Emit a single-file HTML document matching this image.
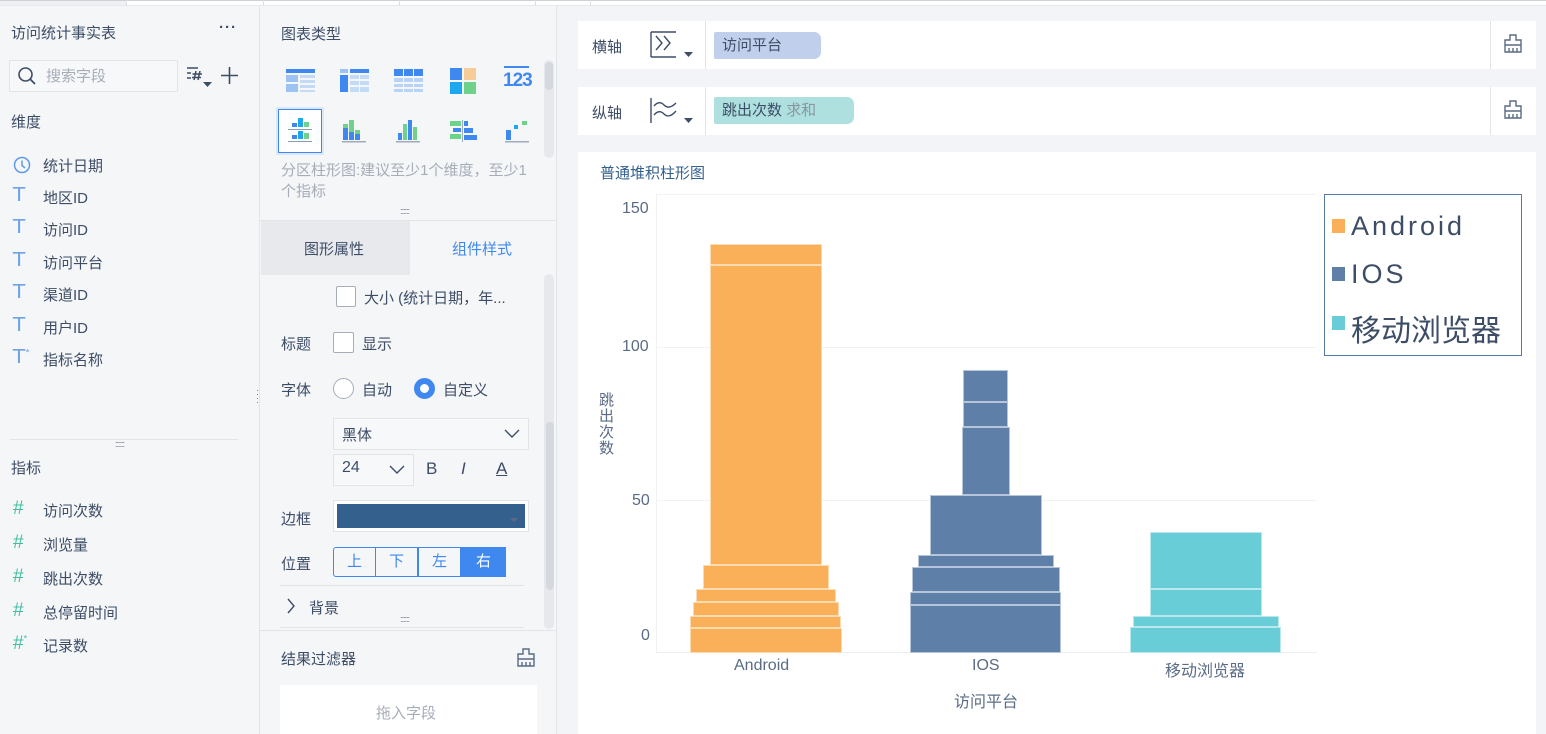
<!DOCTYPE html>
<html><head><meta charset="utf-8"><style>
*{margin:0;padding:0;box-sizing:border-box}
body{width:1546px;height:734px;overflow:hidden;background:#f3f4f7;font-family:"Liberation Sans","Noto Sans CJK SC",sans-serif;color:#3d4d66;font-size:14px;position:relative}
.a{position:absolute;white-space:nowrap}
.ic{position:absolute;color:#6fa3e6;font-size:20px;font-weight:300;transform:scaleX(1.1)}
.hash{position:absolute;color:#3fbfa0;font-size:19px}
.bar{position:absolute;border:1px solid rgba(255,255,255,.55)}
.o{background:#f9b058}.b{background:#5e80a8}.c{background:#68cdd7}
.seg{position:absolute;top:547px;height:30px;border:1px solid #3f88f0;font-size:15px;color:#3f88f0;text-align:center;line-height:28px;width:43px}
</style></head><body>
<!-- top strip -->
<div class="a" style="left:0;top:0;width:1546px;height:6px;background:#fff;border-top:1px solid #d0d1d4;border-bottom:1px solid #e6e8ec"></div>
<div class="a" style="left:0;top:1px;width:126px;height:4px;background:#eef0f4"></div>
<div class="a" style="left:126px;top:0;width:1px;height:6px;background:#dcdee2"></div>
<div class="a" style="left:263px;top:0;width:1px;height:6px;background:#dcdee2"></div>
<div class="a" style="left:399px;top:0;width:1px;height:6px;background:#dcdee2"></div>
<div class="a" style="left:535px;top:0;width:1px;height:6px;background:#dcdee2"></div>
<div class="a" style="left:590px;top:0;width:1px;height:6px;background:#dcdee2"></div>

<!-- left panel -->
<div class="a" style="left:0;top:6px;width:260px;height:728px;background:#f5f6f8;border-right:1px solid #e2e4e8"></div>
<div class="a" style="left:11px;top:22px;font-size:15px">访问统计事实表</div>
<div class="a" style="left:219px;top:19px;font-size:15px;font-weight:bold;letter-spacing:1px">···</div>
<div class="a" style="left:9px;top:60px;width:169px;height:32px;border:1px solid #e2e4e8;background:#f7f8fa;border-radius:2px"></div>
<svg class="a" style="left:17px;top:66px" width="20" height="20"><circle cx="8.5" cy="8.5" r="6.5" fill="none" stroke="#3d4d66" stroke-width="1.6"/><line x1="13" y1="13" x2="18" y2="18" stroke="#3d4d66" stroke-width="1.8"/></svg>
<div class="a" style="left:46px;top:65px;color:#a6adb9;font-size:15px">搜索字段</div>
<svg class="a" style="left:187px;top:66px" width="18" height="16"><path d="M0 2H11 M0 7H4 M0 12H4 M7 14L9 5 M11 14L13 5 M5.5 8H15 M5 11.5H14" fill="none" stroke="#3d4d66" stroke-width="1.5"/></svg>
<svg class="a" style="left:203px;top:82px" width="10" height="6"><path d="M0 0H9L4.5 5Z" fill="#3d4d66"/></svg>
<svg class="a" style="left:221px;top:67px" width="17" height="17"><path d="M8.5 0V17 M0 8.5H17" stroke="#3d4d66" stroke-width="1.6"/></svg>
<div class="a" style="left:11px;top:111px;font-size:15px">维度</div>
<svg class="a" style="left:13px;top:156px" width="18" height="18"><circle cx="9" cy="9" r="7.5" fill="none" stroke="#5e9be6" stroke-width="1.5"/><path d="M9 4.5V9.5L12 12" fill="none" stroke="#5e9be6" stroke-width="1.5"/></svg>
<div class="a" style="left:43px;top:155px;font-size:15px">统计日期</div>
<div class="ic" style="left:13px;top:184px">T</div><div class="a" style="left:43px;top:187px;font-size:15px">地区ID</div>
<div class="ic" style="left:13px;top:216px">T</div><div class="a" style="left:43px;top:219px;font-size:15px">访问ID</div>
<div class="ic" style="left:13px;top:249px">T</div><div class="a" style="left:43px;top:252px;font-size:15px">访问平台</div>
<div class="ic" style="left:13px;top:281px">T</div><div class="a" style="left:43px;top:284px;font-size:15px">渠道ID</div>
<div class="ic" style="left:13px;top:314px">T</div><div class="a" style="left:43px;top:317px;font-size:15px">用户ID</div>
<div class="ic" style="left:13px;top:346px">T<sup style="font-size:9px">*</sup></div><div class="a" style="left:43px;top:349px;font-size:15px">指标名称</div>
<div class="a" style="left:10px;top:439px;width:228px;height:1px;background:#e2e4e8"></div>
<div class="a" style="left:115px;top:439px;font-size:9px;color:#6b7587;letter-spacing:-1px">::::::</div>
<div class="a" style="left:11px;top:457px;font-size:15px">指标</div>
<div class="hash" style="left:13px;top:498px">#</div><div class="a" style="left:43px;top:500px;font-size:15px">访问次数</div>
<div class="hash" style="left:13px;top:532px">#</div><div class="a" style="left:43px;top:534px;font-size:15px">浏览量</div>
<div class="hash" style="left:13px;top:566px">#</div><div class="a" style="left:43px;top:568px;font-size:15px">跳出次数</div>
<div class="hash" style="left:13px;top:600px">#</div><div class="a" style="left:43px;top:602px;font-size:15px">总停留时间</div>
<div class="hash" style="left:13px;top:633px">#<sup style="font-size:9px">*</sup></div><div class="a" style="left:43px;top:635px;font-size:15px">记录数</div>
<div class="a" style="left:256px;top:388px;font-size:9px;color:#6b7587;line-height:4px">·<br>·<br>·<br>·</div>

<!-- middle panel -->
<div class="a" style="left:260px;top:6px;width:297px;height:728px;background:#f5f6f8;border-right:1px solid #e2e4e8"></div>
<div class="a" style="left:281px;top:23px;font-size:15px">图表类型</div>
<svg class="a" style="left:286px;top:69px" width="30" height="25"><rect x="0" y="0" width="29" height="4" fill="#3f88f0"/><rect x="0" y="6" width="12" height="7" fill="#9cc3f3"/><rect x="0" y="15" width="12" height="8" fill="#9cc3f3"/><rect x="14" y="6" width="15" height="3" fill="#c4dbf8"/><rect x="14" y="11" width="15" height="3" fill="#c4dbf8"/><rect x="14" y="16" width="15" height="3" fill="#c4dbf8"/><rect x="14" y="21" width="15" height="2" fill="#c4dbf8"/></svg>
<svg class="a" style="left:340px;top:69px" width="30" height="25"><rect x="0" y="0" width="8" height="4" fill="#9cc3f3"/><rect x="10" y="0" width="19" height="4" fill="#3f88f0"/><rect x="0" y="6" width="8" height="17" fill="#3f88f0"/><rect x="10" y="6" width="9" height="4" fill="#c4dbf8"/><rect x="20" y="6" width="9" height="4" fill="#c4dbf8"/><rect x="10" y="12" width="9" height="4" fill="#c4dbf8"/><rect x="20" y="12" width="9" height="4" fill="#c4dbf8"/><rect x="10" y="18" width="9" height="5" fill="#c4dbf8"/><rect x="20" y="18" width="9" height="5" fill="#c4dbf8"/></svg>
<svg class="a" style="left:394px;top:69px" width="30" height="25"><rect x="0" y="0" width="9" height="7" fill="#3f88f0"/><rect x="10" y="0" width="9" height="7" fill="#3f88f0"/><rect x="20" y="0" width="9" height="7" fill="#3f88f0"/><rect x="0" y="9" width="9" height="4" fill="#b8d3f5"/><rect x="10" y="9" width="9" height="4" fill="#b8d3f5"/><rect x="20" y="9" width="9" height="4" fill="#b8d3f5"/><rect x="0" y="15" width="9" height="3" fill="#b8d3f5"/><rect x="10" y="15" width="9" height="3" fill="#b8d3f5"/><rect x="20" y="15" width="9" height="3" fill="#b8d3f5"/><rect x="0" y="20" width="9" height="3" fill="#b8d3f5"/><rect x="10" y="20" width="9" height="3" fill="#b8d3f5"/><rect x="20" y="20" width="9" height="3" fill="#b8d3f5"/></svg>
<svg class="a" style="left:450px;top:68px" width="27" height="26"><rect x="0" y="0" width="12" height="12" fill="#3f88f0"/><rect x="14" y="0" width="12" height="12" fill="#f9b058" opacity=".6"/><rect x="0" y="14" width="12" height="12" fill="#1ca7ef"/><rect x="14" y="14" width="12" height="12" fill="#6ed28a"/></svg>
<div class="a" style="left:504px;top:66px;width:25px;height:2px;background:#3f88f0"></div>
<div class="a" style="left:503px;top:70px;font-size:19px;font-weight:bold;color:#3f88f0;letter-spacing:-1px">123</div>
<div class="a" style="left:278px;top:109px;width:44px;height:44px;border:1px solid #3f88f0;background:#fff;box-shadow:0 0 0 2px #dbe8f8"></div>
<svg class="a" style="left:288px;top:118px" width="26" height="26"><rect x="4" y="5" width="5" height="4" fill="#3f88f0"/><rect x="10" y="0" width="5" height="9" fill="#1ca7ef"/><rect x="16" y="4" width="5" height="5" fill="#6ed28a"/><rect x="0" y="11" width="24" height="1" fill="#8a9ab0"/><rect x="4" y="17" width="5" height="4" fill="#3f88f0"/><rect x="10" y="13" width="5" height="8" fill="#1ca7ef"/><rect x="16" y="15" width="5" height="6" fill="#6ed28a"/><rect x="0" y="23" width="24" height="1" fill="#8a9ab0"/></svg>
<svg class="a" style="left:342px;top:120px" width="26" height="24"><rect x="1" y="8" width="5" height="12" fill="#3f88f0"/><rect x="1" y="4" width="5" height="4" fill="#6ed28a"/><rect x="7" y="12" width="5" height="8" fill="#3f88f0"/><rect x="7" y="0" width="5" height="12" fill="#6ed28a"/><rect x="13" y="14" width="5" height="6" fill="#3f88f0"/><rect x="13" y="10" width="5" height="4" fill="#6ed28a"/><rect x="0" y="21" width="24" height="1.5" fill="#a0abbb"/></svg>
<svg class="a" style="left:396px;top:120px" width="26" height="24"><rect x="2" y="13" width="4" height="7" fill="#3f88f0"/><rect x="7" y="4" width="4" height="16" fill="#6ed28a"/><rect x="12" y="0" width="4" height="20" fill="#3f88f0"/><rect x="17" y="7" width="4" height="13" fill="#6ed28a"/><rect x="0" y="21" width="24" height="1.5" fill="#a0abbb"/></svg>
<svg class="a" style="left:450px;top:120px" width="28" height="24"><rect x="0" y="1" width="11" height="5" fill="#6ed28a"/><rect x="14" y="1" width="4" height="5" fill="#3f88f0"/><rect x="3" y="8" width="8" height="4" fill="#3f88f0"/><rect x="14" y="8" width="9" height="5" fill="#3f88f0"/><rect x="0" y="14" width="11" height="5" fill="#6ed28a"/><rect x="14" y="15" width="13" height="5" fill="#3f88f0"/><rect x="12" y="0" width="1" height="22" fill="#a0abbb"/></svg>
<svg class="a" style="left:505px;top:120px" width="26" height="24"><rect x="1" y="10" width="5" height="10" fill="#3f88f0"/><rect x="9" y="5" width="4" height="4" fill="#1ca7ef"/><rect x="17" y="1" width="5" height="4" fill="#6ed28a"/><rect x="0" y="21" width="24" height="1.5" fill="#a0abbb"/></svg>
<div class="a" style="left:281px;top:160px;font-size:15px;color:#a6adb9;line-height:21px;white-space:normal;width:260px">分区柱形图:建议至少1个维度，至少1个指标</div>
<div class="a" style="left:544px;top:60px;width:10px;height:98px;background:#e6e8ec;border-radius:5px"></div>
<div class="a" style="left:545px;top:62px;width:8px;height:28px;background:#d5d8de;border-radius:4px"></div>
<div class="a" style="left:400px;top:206px;font-size:9px;color:#6b7587;letter-spacing:-1px">::::::</div>
<div class="a" style="left:260px;top:220px;width:297px;height:1px;background:#e2e4e8"></div>
<div class="a" style="left:261px;top:221px;width:149px;height:54px;background:#e8e9ec"></div>
<div class="a" style="left:304px;top:238px;font-size:15px">图形属性</div>
<div class="a" style="left:452px;top:238px;font-size:15px;color:#3f88f0">组件样式</div>
<div class="a" style="left:544px;top:274px;width:10px;height:355px;background:#e6e8ec;border-radius:5px"></div>
<div class="a" style="left:546px;top:422px;width:8px;height:168px;background:#d5d8de;border-radius:4px"></div>
<div class="a" style="left:336px;top:286px;width:20px;height:21px;border:1px solid #a6adb9;border-radius:2px;background:#fff"></div>
<div class="a" style="left:364px;top:287px;font-size:15px">大小 (统计日期，年...</div>
<div class="a" style="left:281px;top:333px;font-size:15px">标题</div>
<div class="a" style="left:333px;top:332px;width:21px;height:21px;border:1px solid #a6adb9;border-radius:2px;background:#fff"></div>
<div class="a" style="left:362px;top:333px;font-size:15px">显示</div>
<div class="a" style="left:281px;top:379px;font-size:15px">字体</div>
<div class="a" style="left:333px;top:378px;width:21px;height:21px;border:1px solid #a6adb9;border-radius:50%;background:#fff"></div>
<div class="a" style="left:362px;top:379px;font-size:15px">自动</div>
<div class="a" style="left:414px;top:378px;width:21px;height:21px;border:6px solid #3f88f0;border-radius:50%;background:#fff"></div>
<div class="a" style="left:443px;top:379px;font-size:15px">自定义</div>
<div class="a" style="left:333px;top:418px;width:196px;height:32px;border:1px solid #e2e4e8;background:#f7f8fa"></div>
<div class="a" style="left:342px;top:424px;font-size:15px">黑体</div>
<svg class="a" style="left:504px;top:429px" width="16" height="10"><path d="M1 1L8 8L15 1" fill="none" stroke="#3d4d66" stroke-width="1.4"/></svg>
<div class="a" style="left:333px;top:454px;width:81px;height:32px;border:1px solid #e2e4e8;background:#f7f8fa"></div>
<div class="a" style="left:342px;top:459px;font-size:16px">24</div>
<svg class="a" style="left:389px;top:465px" width="16" height="10"><path d="M1 1L8 8L15 1" fill="none" stroke="#3d4d66" stroke-width="1.4"/></svg>
<div class="a" style="left:426px;top:459px;font-size:17px">B</div>
<div class="a" style="left:461px;top:459px;font-size:17px;font-style:italic">I</div>
<div class="a" style="left:496px;top:459px;font-size:17px;text-decoration:underline">A</div>
<div class="a" style="left:281px;top:508px;font-size:15px">边框</div>
<div class="a" style="left:333px;top:500px;width:196px;height:32px;border:1px solid #e2e4e8;background:#fff"></div>
<div class="a" style="left:337px;top:504px;width:188px;height:24px;background:#34608e"></div>
<svg class="a" style="left:510px;top:518px" width="8" height="5"><path d="M0 0H8L4 4Z" fill="#5a6b84"/></svg>
<div class="a" style="left:281px;top:553px;font-size:15px">位置</div>
<div class="seg" style="left:333px;border-radius:3px 0 0 3px">上</div>
<div class="seg" style="left:375px">下</div>
<div class="seg" style="left:418px">左</div>
<div class="seg" style="left:461px;background:#3f88f0;color:#fff;width:45px">右</div>
<div class="a" style="left:280px;top:585px;width:244px;height:1px;background:#e2e4e8"></div>
<svg class="a" style="left:286px;top:598px" width="10" height="16"><path d="M2 1L8 8L2 15" fill="none" stroke="#3d4d66" stroke-width="1.4"/></svg>
<div class="a" style="left:309px;top:597px;font-size:15px">背景</div>
<div class="a" style="left:400px;top:614px;font-size:9px;color:#6b7587;letter-spacing:-1px">::::::</div>
<div class="a" style="left:280px;top:627px;width:244px;height:1px;background:#e2e4e8"></div>
<div class="a" style="left:260px;top:630px;width:297px;height:1px;background:#e2e4e8"></div>
<div class="a" style="left:281px;top:648px;font-size:15px">结果过滤器</div>
<svg class="a" style="left:516px;top:648px" width="20" height="20"><path d="M7 1H13V6H18V18H2V6H7Z M2 11H18 M6 14V18 M10 14V18 M14 14V18" fill="none" stroke="#5a6b84" stroke-width="1.4"/></svg>
<div class="a" style="left:280px;top:685px;width:257px;height:49px;background:#fff"></div>
<div class="a" style="left:376px;top:702px;font-size:15px;color:#a6adb9">拖入字段</div>

<!-- axis rows -->
<div class="a" style="left:578px;top:21px;width:958px;height:48px;background:#fff"></div>
<div class="a" style="left:705px;top:21px;width:1px;height:48px;background:#e2e4e8"></div>
<div class="a" style="left:1490px;top:21px;width:1px;height:48px;background:#e2e4e8"></div>
<div class="a" style="left:592px;top:36px;font-size:15px">横轴</div>
<svg class="a" style="left:650px;top:31px" width="28" height="27"><path d="M1 1V26 M1 1H26 M1 26H26 M6 5L12 12L6 19 M14 5L20 12L14 19" fill="none" stroke="#3d4d66" stroke-width="1.4"/></svg>
<svg class="a" style="left:684px;top:52px" width="10" height="6"><path d="M0 0H9L4.5 5Z" fill="#3d4d66"/></svg>
<div class="a" style="left:714px;top:32px;width:107px;height:27px;background:#c0d0ec;border-radius:2px 7px 7px 2px;padding:4px 8px;font-size:15px;line-height:19px">访问平台</div>
<svg class="a" style="left:1503px;top:34px" width="20" height="20"><path d="M7 1H13V6H18V18H2V6H7Z M2 11H18 M6 14V18 M10 14V18 M14 14V18" fill="none" stroke="#5a6b84" stroke-width="1.4"/></svg>

<div class="a" style="left:578px;top:87px;width:958px;height:48px;background:#fff"></div>
<div class="a" style="left:705px;top:87px;width:1px;height:48px;background:#e2e4e8"></div>
<div class="a" style="left:1490px;top:87px;width:1px;height:48px;background:#e2e4e8"></div>
<div class="a" style="left:592px;top:102px;font-size:15px">纵轴</div>
<svg class="a" style="left:650px;top:97px" width="28" height="27"><path d="M1 1V26 M4 9Q9 3 14 8T26 6 M4 18Q9 12 14 17T26 14" fill="none" stroke="#3d4d66" stroke-width="1.4"/></svg>
<svg class="a" style="left:684px;top:118px" width="10" height="6"><path d="M0 0H9L4.5 5Z" fill="#3d4d66"/></svg>
<div class="a" style="left:714px;top:97px;width:140px;height:27px;background:#ade0de;border-radius:2px 7px 7px 2px;padding:4px 8px;font-size:15px;line-height:19px">跳出次数 <span style="color:#8a94a3">求和</span></div>
<svg class="a" style="left:1503px;top:100px" width="20" height="20"><path d="M7 1H13V6H18V18H2V6H7Z M2 11H18 M6 14V18 M10 14V18 M14 14V18" fill="none" stroke="#5a6b84" stroke-width="1.4"/></svg>

<!-- chart card -->
<div class="a" style="left:578px;top:152px;width:958px;height:582px;background:#fff"></div>
<div class="a" style="left:600px;top:162px;font-size:15px;color:#34608e">普通堆积柱形图</div>
<div class="a" style="left:657px;top:194px;width:660px;height:1px;background:#f2f3f5"></div>
<div class="a" style="left:657px;top:347px;width:660px;height:1px;background:#f2f3f5"></div>
<div class="a" style="left:657px;top:500px;width:660px;height:1px;background:#f2f3f5"></div>
<div class="a" style="left:657px;top:652px;width:660px;height:1px;background:#eceef1"></div>
<div class="a" style="left:656px;top:194px;width:1px;height:459px;background:#f0f1f3"></div>
<div class="a" style="left:622px;top:200px;font-size:16px;color:#5a6b84">150</div>
<div class="a" style="left:622px;top:338px;font-size:16px;color:#5a6b84">100</div>
<div class="a" style="left:632px;top:492px;font-size:16px;color:#5a6b84">50</div>
<div class="a" style="left:641px;top:627px;font-size:16px;color:#5a6b84">0</div>
<div class="a" style="left:599px;top:393px;font-size:15px;color:#5a6b84;line-height:16px;width:16px;white-space:normal">跳出次数</div>

<div class="bar o" style="left:710px;top:244px;width:112px;height:21px"></div>
<div class="bar o" style="left:710px;top:265px;width:112px;height:300px"></div>
<div class="bar o" style="left:703px;top:565px;width:126px;height:24px"></div>
<div class="bar o" style="left:696px;top:589px;width:140px;height:13px"></div>
<div class="bar o" style="left:693px;top:602px;width:146px;height:14px"></div>
<div class="bar o" style="left:690px;top:616px;width:151px;height:12px"></div>
<div class="bar o" style="left:690px;top:628px;width:152px;height:25px"></div>

<div class="bar b" style="left:963px;top:370px;width:45px;height:32px"></div>
<div class="bar b" style="left:963px;top:402px;width:45px;height:25px"></div>
<div class="bar b" style="left:962px;top:427px;width:48px;height:68px"></div>
<div class="bar b" style="left:930px;top:495px;width:112px;height:60px"></div>
<div class="bar b" style="left:918px;top:555px;width:136px;height:12px"></div>
<div class="bar b" style="left:912px;top:567px;width:148px;height:25px"></div>
<div class="bar b" style="left:910px;top:592px;width:151px;height:13px"></div>
<div class="bar b" style="left:910px;top:605px;width:151px;height:48px"></div>

<div class="bar c" style="left:1150px;top:532px;width:112px;height:57px"></div>
<div class="bar c" style="left:1150px;top:589px;width:112px;height:27px"></div>
<div class="bar c" style="left:1133px;top:616px;width:146px;height:11px"></div>
<div class="bar c" style="left:1130px;top:627px;width:151px;height:26px"></div>

<div class="a" style="left:734px;top:657px;font-size:16px;color:#5a6b84">Android</div>
<div class="a" style="left:972px;top:657px;font-size:16px;color:#5a6b84">IOS</div>
<div class="a" style="left:1165px;top:657px;font-size:16px;color:#5a6b84">移动浏览器</div>
<div class="a" style="left:954px;top:688px;font-size:16px;color:#5a6b84">访问平台</div>

<div class="a" style="left:1324px;top:194px;width:198px;height:162px;border:1.5px solid #5a7aa6;background:#fff"></div>
<div class="a" style="left:1332px;top:219px;width:13px;height:14px;background:#f9b058"></div>
<div class="a" style="left:1351px;top:211px;font-size:27px;letter-spacing:3px;color:#3d4d66">Android</div>
<div class="a" style="left:1332px;top:267px;width:13px;height:14px;background:#5e80a8"></div>
<div class="a" style="left:1351px;top:259px;font-size:27px;letter-spacing:3px;color:#3d4d66">IOS</div>
<div class="a" style="left:1332px;top:316px;width:13px;height:14px;background:#68cdd7"></div>
<div class="a" style="left:1351px;top:306px;font-size:30px;color:#3d4d66">移动浏览器</div>
</body></html>
